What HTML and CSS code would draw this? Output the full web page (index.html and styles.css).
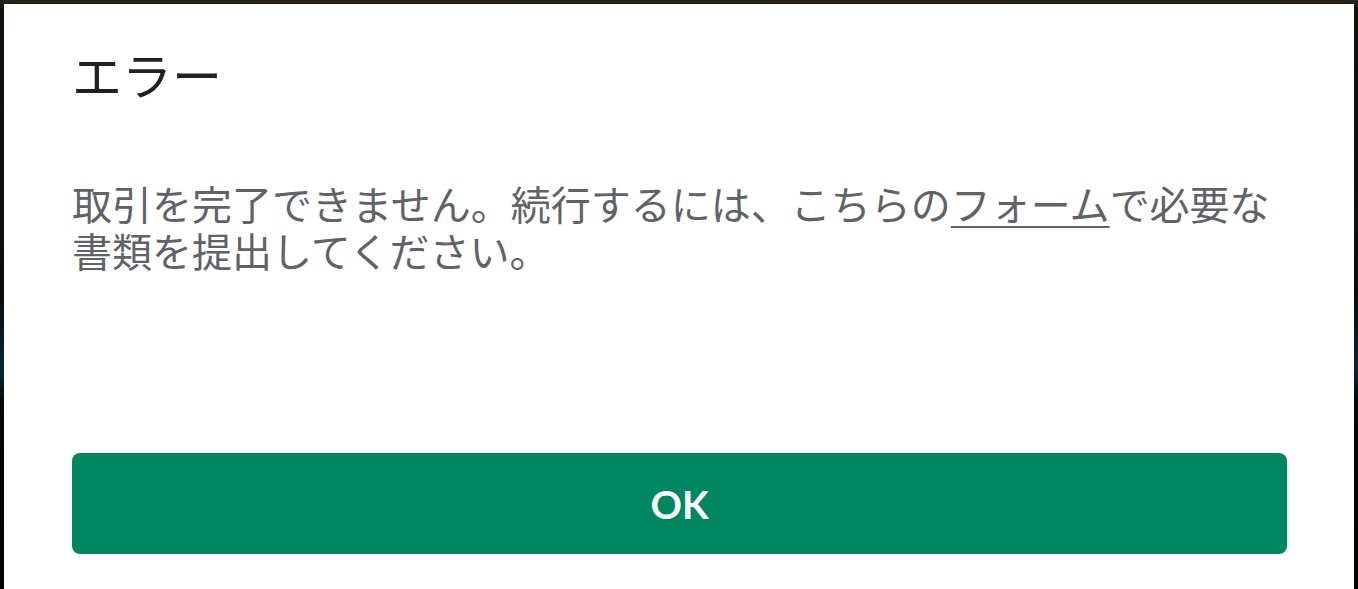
FILE: index.html
```html
<!DOCTYPE html>
<html lang="ja">
<head>
<meta charset="utf-8">
<link rel="stylesheet" href="styles.css">
</head>
<body>
<div class="dialog">
  <h1 class="title">エラー</h1>
  <p class="message">取引を完了できません。続行するには、こちらの<a class="link" href="#">フォーム</a>で必要な書類を提出してください。</p>
  <button class="ok">OK</button>
</div>
</body>
</html>
```
FILE: styles.css
```css
html, body {
  margin: 0;
  height: 100%;
}
body {
  background: linear-gradient(180deg, #2b2519 0px, #15120d 10px, #0a0d10 300px, #0b2434 370px, #05090c 400px, #000 589px);
  overflow: hidden;
  font-family: "Noto Sans CJK JP", "Noto Sans", sans-serif;
}
.dialog {
  margin: 4px 4px 0 4px;
  height: 600px;
  background: #fff;
  padding: 36px 67px 0 68px;
  box-sizing: border-box;
  display: flex;
  flex-direction: column;
}
.title {
  margin: 0;
  font-size: 50px;
  line-height: 66px;
  font-weight: 400;
  color: #202124;
}
.message {
  margin: 74px 0 0 0;
  font-size: 40px;
  line-height: 47px;
  color: #5f6368;
}
.link {
  color: #5f6368;
  text-decoration: underline;
  text-decoration-thickness: 2px;
  text-underline-offset: 6px;
}
.ok {
  margin-top: 179px;
  height: 101px;
  border: none;
  border-radius: 8px;
  background: #01875f;
  color: #fff;
  font-family: "Lato", "Noto Sans", sans-serif;
  font-weight: 700;
  font-size: 39px;
  display: flex;
  align-items: center;
  justify-content: center;
  padding: 0;
}
```
